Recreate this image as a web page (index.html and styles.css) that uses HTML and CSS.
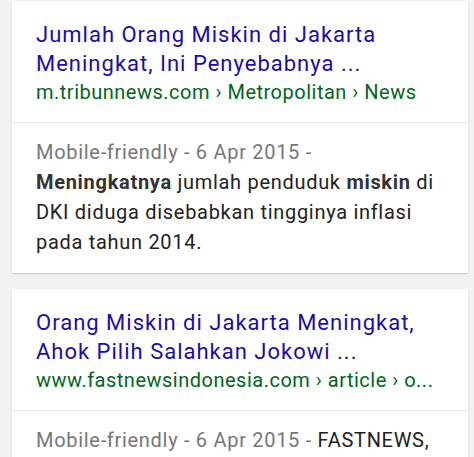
FILE: index.html
```html
<!DOCTYPE html>
<html lang="id">
<head>
<meta charset="utf-8">
<title>Hasil pencarian</title>
<link rel="stylesheet" href="styles.css">
</head>
<body>
<div class="results">
  <div class="card">
    <div class="head">
      <a class="title" href="#">Jumlah Orang Miskin di Jakarta Meningkat, Ini Penyebabnya ...</a>
      <div class="url">m.tribunnews.com › Metropolitan › News</div>
    </div>
    <div class="body">
      <span class="meta">Mobile-friendly - 6 Apr 2015 - </span><b>Meningkatnya</b> jumlah penduduk <b>miskin</b> di DKI diduga disebabkan tingginya inflasi pada tahun 2014.
    </div>
  </div>
  <div class="card">
    <div class="head">
      <a class="title" href="#">Orang Miskin di Jakarta Meningkat, Ahok Pilih Salahkan Jokowi ...</a>
      <div class="url">www.fastnewsindonesia.com › article › o...</div>
    </div>
    <div class="body">
      <span class="meta">Mobile-friendly - 6 Apr 2015 - </span>FASTNEWS, Jakarta - Jumlah penduduk miskin di Jakarta meningkat.
    </div>
  </div>
</div>
</body>
</html>
```
FILE: styles.css
```css
html, body {
  margin: 0;
  padding: 0;
  background: #f1f1f1;
}
body {
  font-family: Roboto, "Noto Sans", Arial, sans-serif;
  overflow: hidden;
}
.results {
  display: flex;
  flex-direction: column;
  gap: 16px;
  padding: 1px 6px 0 12px;
}
.card {
  background: #fff;
  border-radius: 2px;
  box-shadow: 0 1px 2px rgba(0, 0, 0, 0.18);
}
.head {
  padding: 19px 24px 16px 24px;
  border-bottom: 1px solid #e6e6e6;
}
.title {
  display: block;
  color: #1a0dab;
  text-decoration: none;
  font-size: 22px;
  line-height: 29px;
  letter-spacing: 1px;
}
.url {
  color: #006621;
  font-size: 20px;
  line-height: 28px;
  letter-spacing: 0.5px;
  white-space: nowrap;
}
.body {
  padding: 14px 24px 16px 24px;
  color: #222;
  font-size: 20px;
  line-height: 30px;
  letter-spacing: 0.7px;
}
.meta {
  color: #777;
}
.body b {
  font-weight: bold;
  color: #333;
}
```
